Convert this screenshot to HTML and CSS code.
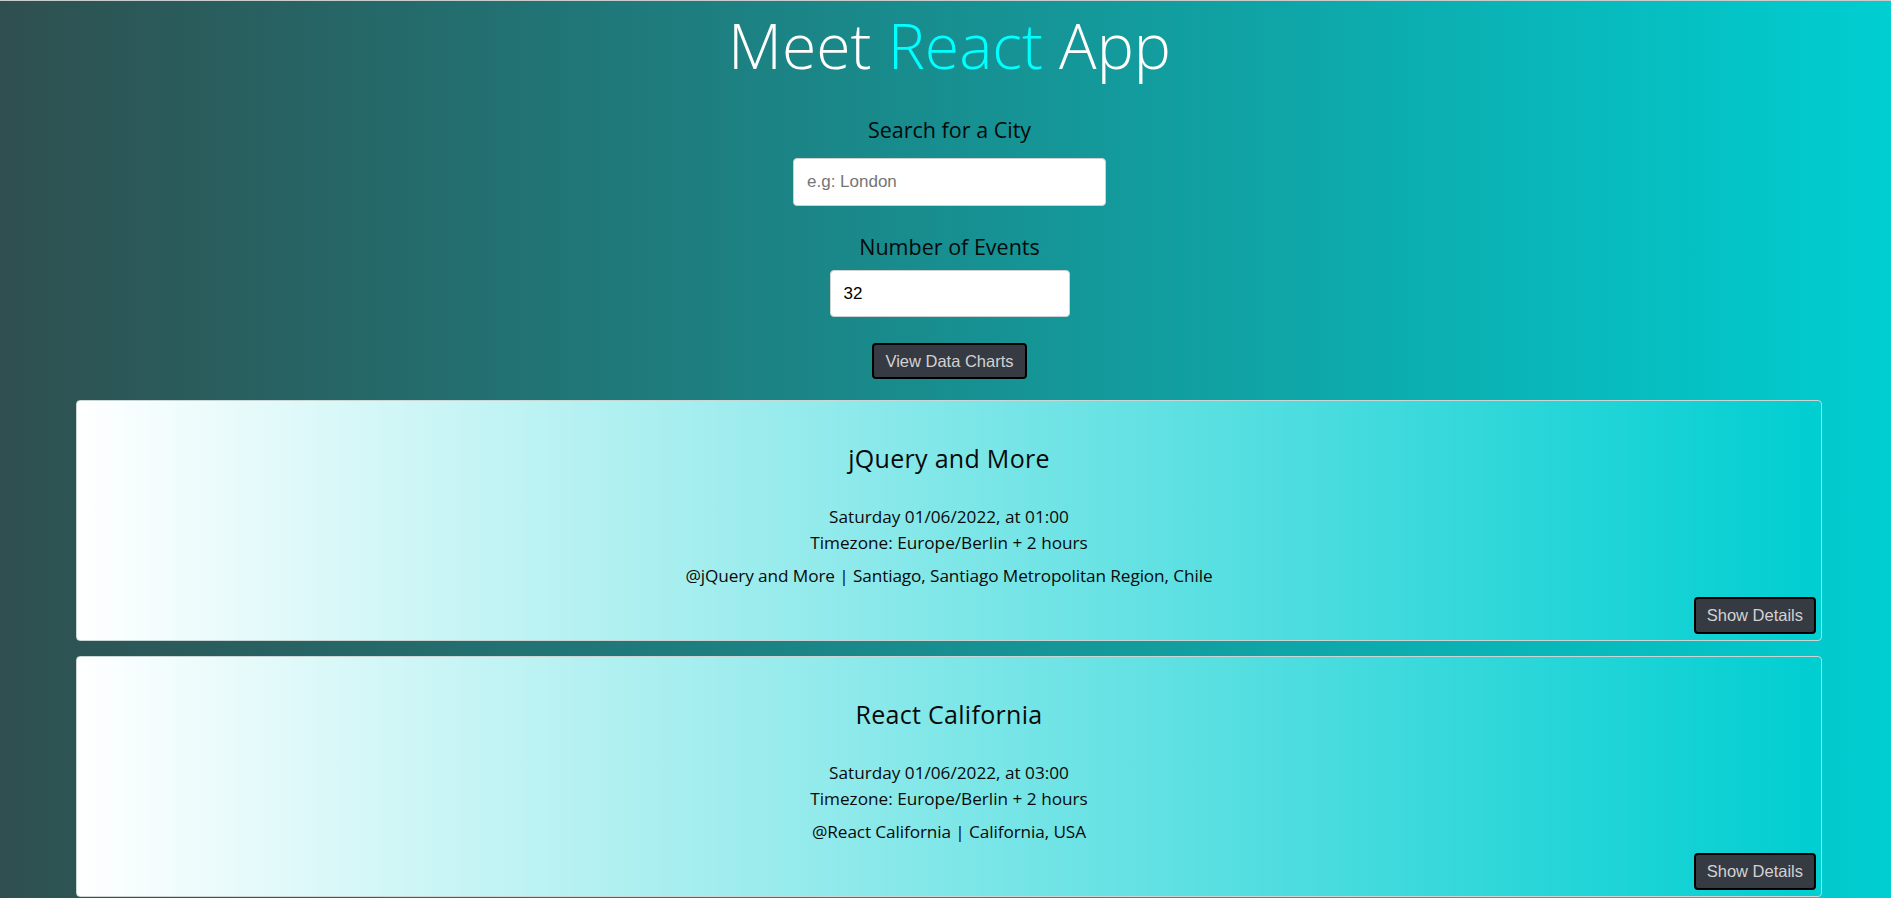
FILE: index.html
```html
<!DOCTYPE html>
<html lang="en">
<head>
<meta charset="utf-8">
<title>Meet React App</title>
<link rel="stylesheet" href="styles.css">
</head>
<body>
<div class="app">
  <h1 class="app-title">Meet <span class="accent">React</span> App</h1>

  <div class="city-search">
    <label class="field-label label-city" for="city">Search for a City</label>
    <input id="city" class="text-input input-city" type="text" placeholder="e.g: London">
  </div>

  <div class="number-events">
    <label class="field-label label-number" for="num">Number of Events</label>
    <input id="num" class="text-input input-number" type="text" value="32">
  </div>

  <button class="dark-btn charts-btn">View Data Charts</button>

  <ul class="event-list">
    <li class="event">
      <h2 class="event-title">jQuery and More</h2>
      <p class="event-time">Saturday 01/06/2022, at 01:00<br>Timezone: Europe/Berlin + 2 hours</p>
      <p class="event-location">@jQuery and More | Santiago, Santiago Metropolitan Region, Chile</p>
      <div class="event-actions"><button class="dark-btn details-btn">Show Details</button></div>
    </li>
    <li class="event">
      <h2 class="event-title">React California</h2>
      <p class="event-time">Saturday 01/06/2022, at 03:00<br>Timezone: Europe/Berlin + 2 hours</p>
      <p class="event-location">@React California | California, USA</p>
      <div class="event-actions"><button class="dark-btn details-btn">Show Details</button></div>
    </li>
  </ul>
</div>
</body>
</html>
```

FILE: styles.css
```css
* { box-sizing: border-box; }

html, body {
  margin: 0;
  padding: 0;
}

body {
  min-height: 100vh;
  border-top: 1px solid #c9cccc;
  background: linear-gradient(to right, #2f4f4f, #00ced1);
  font-family: "Open Sans", "Noto Sans", sans-serif;
  color: #0a0a0a;
}

.app {
  display: flex;
  flex-direction: column;
  align-items: center;
  text-align: center;
  padding-left: 8px;
}

.app-title {
  margin: 6px 0 0;
  font-size: 62.5px;
  line-height: 76px;
  font-weight: 300;
  color: #ffffff;
}

.accent { color: #00ffff; }

.city-search,
.number-events {
  display: flex;
  flex-direction: column;
  align-items: center;
}

.field-label {
  font-size: 21.5px;
  line-height: 30px;
  color: #050a0a;
}

.label-city { margin-top: 32px; }
.label-number { margin-top: 26px; }

.text-input {
  height: 48px;
  padding: 0 13px;
  border: 1px solid #cfd2d2;
  border-radius: 4px;
  background: #fff;
  font-family: "Liberation Sans", Arial, sans-serif;
  font-size: 17px;
  color: #000;
}

.text-input::placeholder { color: #757575; }

.input-city {
  width: 313px;
  margin-top: 13px;
}

.input-number {
  width: 240px;
  height: 47px;
  margin-top: 8px;
}

.dark-btn {
  background: #363a42;
  border: 2px solid #000;
  border-radius: 4px;
  color: #d2d2d2;
  font-family: "Liberation Sans", Arial, sans-serif;
  font-size: 16.5px;
  padding: 0 11px;
}

.charts-btn {
  margin-top: 26px;
  height: 36px;
}

.event-list {
  list-style: none;
  margin: 21px 0 0;
  padding: 0 0 0 68px;
  align-self: stretch;
  display: flex;
  flex-direction: column;
  gap: 15px;
}

.event {
  width: 1746px;
  height: 241px;
  border: 1px solid #c9d6d6;
  border-radius: 4px;
  background: linear-gradient(to right, #ffffff, #00ced1);
  padding: 41px 5px 6px;
  display: flex;
  flex-direction: column;
}

.event-title {
  margin: 0;
  font-size: 25px;
  line-height: 32px;
  font-weight: 400;
  letter-spacing: 0.3px;
}

.event-time {
  margin: 30px 0 0;
  font-size: 17.2px;
  line-height: 26px;
}

.event-location {
  margin: 7px 0 0;
  font-size: 17.2px;
  line-height: 26px;
  letter-spacing: -0.1px;
}

.event-actions {
  margin-top: auto;
  display: flex;
  justify-content: flex-end;
}

.details-btn {
  height: 37px;
}
```
